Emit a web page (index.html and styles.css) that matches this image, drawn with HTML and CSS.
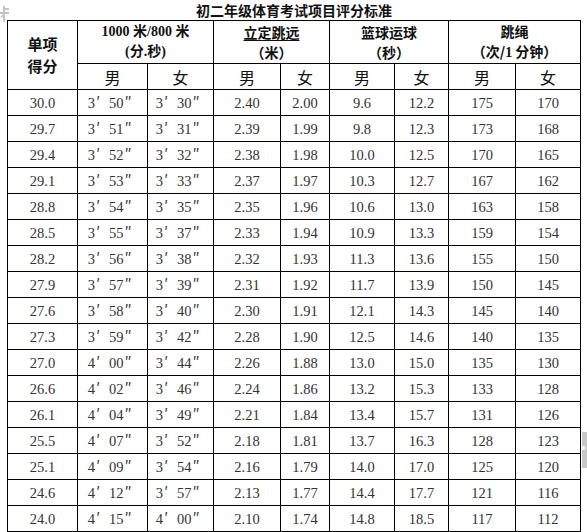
FILE: index.html
```html
<!DOCTYPE html>
<html lang="zh-CN">
<head>
<meta charset="utf-8">
<title>初二年级体育考试项目评分标准</title>
<link rel="stylesheet" href="styles.css">
</head>
<body>
<div class="wrap">
  <div class="title">初二年级体育考试项目评分标准</div>
  <table class="score">
    <colgroup>
      <col class="c-a"><col class="c-b"><col class="c-c"><col class="c-d"><col class="c-e">
      <col class="c-f"><col class="c-g"><col class="c-h"><col class="c-i">
    </colgroup>
    <thead>
      <tr class="h1">
        <th rowspan="2" class="hd">单项<br>得分</th>
        <th colspan="2" class="hs">1000 米/800 米<br>(分.秒)</th>
        <th colspan="2" class="hd"><span class="ul">立定跳远</span><br><span class="po">（</span>米<span class="pc">）</span></th>
        <th colspan="2" class="hd">篮球运球<br><span class="po">（</span>秒<span class="pc">）</span></th>
        <th colspan="2" class="hd">跳绳<br><span class="po">（</span>次/<span class="num">1</span> 分钟<span class="pc">）</span></th>
      </tr>
      <tr class="h2">
        <th class="sx">男</th><th class="sx">女</th>
        <th class="sx">男</th><th class="sx">女</th>
        <th class="sx">男</th><th class="sx">女</th>
        <th class="sx">男</th><th class="sx">女</th>
      </tr>
    </thead>
    <tbody>
      <tr><td>30.0</td><td>3<span class="p">′</span>50<span class="p">″</span></td><td>3<span class="p">′</span>30<span class="p">″</span></td><td>2.40</td><td>2.00</td><td>9.6</td><td>12.2</td><td>175</td><td>170</td></tr>
      <tr><td>29.7</td><td>3<span class="p">′</span>51<span class="p">″</span></td><td>3<span class="p">′</span>31<span class="p">″</span></td><td>2.39</td><td>1.99</td><td>9.8</td><td>12.3</td><td>173</td><td>168</td></tr>
      <tr><td>29.4</td><td>3<span class="p">′</span>52<span class="p">″</span></td><td>3<span class="p">′</span>32<span class="p">″</span></td><td>2.38</td><td>1.98</td><td>10.0</td><td>12.5</td><td>170</td><td>165</td></tr>
      <tr><td>29.1</td><td>3<span class="p">′</span>53<span class="p">″</span></td><td>3<span class="p">′</span>33<span class="p">″</span></td><td>2.37</td><td>1.97</td><td>10.3</td><td>12.7</td><td>167</td><td>162</td></tr>
      <tr><td>28.8</td><td>3<span class="p">′</span>54<span class="p">″</span></td><td>3<span class="p">′</span>35<span class="p">″</span></td><td>2.35</td><td>1.96</td><td>10.6</td><td>13.0</td><td>163</td><td>158</td></tr>
      <tr><td>28.5</td><td>3<span class="p">′</span>55<span class="p">″</span></td><td>3<span class="p">′</span>37<span class="p">″</span></td><td>2.33</td><td>1.94</td><td>10.9</td><td>13.3</td><td>159</td><td>154</td></tr>
      <tr><td>28.2</td><td>3<span class="p">′</span>56<span class="p">″</span></td><td>3<span class="p">′</span>38<span class="p">″</span></td><td>2.32</td><td>1.93</td><td>11.3</td><td>13.6</td><td>155</td><td>150</td></tr>
      <tr><td>27.9</td><td>3<span class="p">′</span>57<span class="p">″</span></td><td>3<span class="p">′</span>39<span class="p">″</span></td><td>2.31</td><td>1.92</td><td>11.7</td><td>13.9</td><td>150</td><td>145</td></tr>
      <tr><td>27.6</td><td>3<span class="p">′</span>58<span class="p">″</span></td><td>3<span class="p">′</span>40<span class="p">″</span></td><td>2.30</td><td>1.91</td><td>12.1</td><td>14.3</td><td>145</td><td>140</td></tr>
      <tr><td>27.3</td><td>3<span class="p">′</span>59<span class="p">″</span></td><td>3<span class="p">′</span>42<span class="p">″</span></td><td>2.28</td><td>1.90</td><td>12.5</td><td>14.6</td><td>140</td><td>135</td></tr>
      <tr><td>27.0</td><td>4<span class="p">′</span>00<span class="p">″</span></td><td>3<span class="p">′</span>44<span class="p">″</span></td><td>2.26</td><td>1.88</td><td>13.0</td><td>15.0</td><td>135</td><td>130</td></tr>
      <tr><td>26.6</td><td>4<span class="p">′</span>02<span class="p">″</span></td><td>3<span class="p">′</span>46<span class="p">″</span></td><td>2.24</td><td>1.86</td><td>13.2</td><td>15.3</td><td>133</td><td>128</td></tr>
      <tr><td>26.1</td><td>4<span class="p">′</span>04<span class="p">″</span></td><td>3<span class="p">′</span>49<span class="p">″</span></td><td>2.21</td><td>1.84</td><td>13.4</td><td>15.7</td><td>131</td><td>126</td></tr>
      <tr><td>25.5</td><td>4<span class="p">′</span>07<span class="p">″</span></td><td>3<span class="p">′</span>52<span class="p">″</span></td><td>2.18</td><td>1.81</td><td>13.7</td><td>16.3</td><td>128</td><td>123</td></tr>
      <tr><td>25.1</td><td>4<span class="p">′</span>09<span class="p">″</span></td><td>3<span class="p">′</span>54<span class="p">″</span></td><td>2.16</td><td>1.79</td><td>14.0</td><td>17.0</td><td>125</td><td>120</td></tr>
      <tr><td>24.6</td><td>4<span class="p">′</span>12<span class="p">″</span></td><td>3<span class="p">′</span>57<span class="p">″</span></td><td>2.13</td><td>1.77</td><td>14.4</td><td>17.7</td><td>121</td><td>116</td></tr>
      <tr><td>24.0</td><td>4<span class="p">′</span>15<span class="p">″</span></td><td>4<span class="p">′</span>00<span class="p">″</span></td><td>2.10</td><td>1.74</td><td>14.8</td><td>18.5</td><td>117</td><td>112</td></tr>
    </tbody>
  </table>
</div>
<svg class="mark-tl" width="10" height="18" viewBox="0 0 10 18" aria-hidden="true">
  <path d="M4 1 V17 M0 8 H9 M4 4 H9 M1 12 L4 10" stroke="#c4c4c4" stroke-width="2" fill="none"/>
</svg>
<div class="mark-r"><span class="notch"></span></div>
</body>
</html>
```
FILE: styles.css
```css
html, body {
  margin: 0;
  padding: 0;
  background: #ffffff;
}

body {
  font-family: "Liberation Serif", "Noto Sans CJK SC", serif;
  color: #2a2a2a;
  position: relative;
  width: 587px;
  height: 532px;
  overflow: hidden;
}

.wrap {
  margin-left: 7px;
  width: 574px;
}

.title {
  height: 20px;
  line-height: 20px;
  text-align: center;
  font-family: "Noto Sans CJK SC", sans-serif;
  font-size: 14px;
  font-weight: bold;
  color: #111;
}

.score {
  border-collapse: collapse;
  table-layout: fixed;
  width: 574px;
}

.c-a { width: 70px; }
.c-b { width: 70px; }
.c-c { width: 66px; }
.c-d { width: 67px; }
.c-e { width: 49px; }
.c-f { width: 65px; }
.c-g { width: 54px; }
.c-h { width: 67px; }
.c-i { width: 65px; }

.score th,
.score td {
  border: 1px solid #000;
  padding: 0;
  text-align: center;
  vertical-align: middle;
  white-space: nowrap;
}

.h1 { height: 41px; }
.h2 { height: 26px; }
.score tbody tr { height: 26px; }

.hd {
  font-family: "Noto Sans CJK SC", sans-serif;
  font-size: 14px;
  font-weight: bold;
  line-height: 20px;
  color: #111;
}

.h1 th:first-child {
  font-size: 15px;
  line-height: 22px;
}

.hs {
  font-family: "Liberation Serif", "Noto Sans CJK SC", serif;
  font-size: 14px;
  font-weight: bold;
  line-height: 20px;
  color: #111;
}

.num {
  font-family: "Liberation Serif", serif;
}

.po,
.pc {
  display: inline-block;
  width: 14px;
}

.po { text-align: right; }
.pc { text-align: left; }

.ul {
  text-decoration: underline;
  text-underline-offset: 2px;
}

.sx {
  font-family: "Noto Sans CJK SC", sans-serif;
  font-size: 16px;
  font-weight: normal;
  line-height: 20px;
  color: #111;
}

.score td {
  font-size: 14.5px;
  line-height: 20px;
  color: #333;
}

.p {
  display: inline-block;
  width: 13px;
  padding-left: 1px;
  text-align: left;
  font-family: "Noto Sans CJK SC", sans-serif;
  font-size: 15px;
}

.mark-tl {
  position: absolute;
  left: 0;
  top: 5px;
}

.mark-r {
  position: absolute;
  left: 582px;
  top: 432px;
  width: 5px;
  height: 36px;
  background: #c8c8c8;
}

.notch {
  position: absolute;
  left: 0;
  top: 14px;
  width: 3px;
  height: 4px;
  background: #f4f4f4;
}
```
